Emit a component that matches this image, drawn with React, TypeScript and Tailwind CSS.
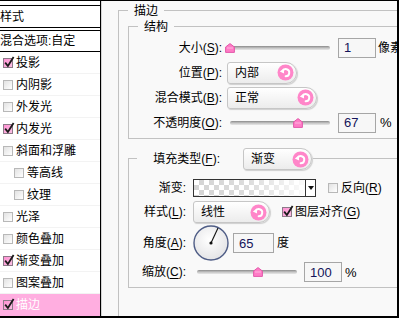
import React from 'react';

const Check = ({ checked }: { checked?: boolean }) =>
  checked ? (
    <span className="relative block w-[10px] h-[10px] border border-[#8c7a88] bg-gradient-to-br from-[#ff8fd2] to-[#f9c0e4] shrink-0">
      <svg className="absolute left-[0px] top-[-3px]" width="11" height="12" viewBox="0 0 11 12">
        <path d="M1.2 6.6 L3.9 10 L9.6 1" stroke="#1a1a1a" strokeWidth="1.8" fill="none" />
      </svg>
    </span>
  ) : (
    <span className="block w-[10px] h-[10px] border border-[#b8b8b8] bg-gradient-to-br from-[#e2e2e2] to-white shrink-0" />
  );

const PinkIcon = () => (
  <svg width="17" height="17" viewBox="0 0 17 17" className="shrink-0">
    <circle cx="8.5" cy="8.5" r="8" fill="#ff86c9" />
    <path d="M5.4 7.2 A3.6 3.6 0 1 1 8.6 12.3" stroke="#fff" strokeWidth="1.9" fill="none" strokeLinecap="round" />
    <path d="M2.8 7.4 L6.9 4.4 L7.1 9.4 Z" fill="#fff" />
  </svg>
);

const Dropdown = ({ w, text }: { w: string; text: string }) => (
  <div
    className={`${w} h-[22px] shrink-0 flex items-center border border-[#c6c6c6] rounded-l-[3px] rounded-r-[11px] bg-gradient-to-b from-white to-[#ececec] shadow-[1px_1px_1px_#cfcfcf] pl-[7px] pr-[2px]`}
  >
    <span className="whitespace-nowrap">{text}</span>
    <span className="ml-auto flex">
      <PinkIcon />
    </span>
  </div>
);

const Slider = ({ w, pos }: { w: string; pos: number }) => (
  <div className={`relative ${w} h-[10px] shrink-0 flex items-center`}>
    <div className="w-full h-[4px] rounded-full bg-gradient-to-b from-[#8a8a8a] via-[#c4c4c4] to-[#e8e8e8]" />
    <svg className="absolute top-[0px]" style={{ left: pos - 5 }} width="10" height="10" viewBox="0 0 10 10">
      <path d="M5 0.6 L9.4 4 L9.4 9.4 L0.6 9.4 L0.6 4 Z" fill="#ff7cc6" stroke="#e25aab" strokeWidth="1" />
      <path d="M2 5 L8 5" stroke="#ffb6e0" strokeWidth="1" />
    </svg>
  </div>
);

const NumInput = ({ w, v }: { w: string; v: string }) => (
  <div
    className={`${w} h-[20px] shrink-0 border border-[#a6a6a6] bg-[#f7f7f7] flex items-center pl-[5px] text-[#14145a] text-[13px]`}
  >
    {v}
  </div>
);

const Dial = () => (
  <svg width="36" height="36" viewBox="0 0 36 36" className="shrink-0">
    <defs>
      <radialGradient id="dg" cx="45%" cy="40%" r="60%">
        <stop offset="0%" stopColor="#ffffff" />
        <stop offset="100%" stopColor="#e4e4e6" />
      </radialGradient>
    </defs>
    <circle cx="18" cy="18" r="17" fill="url(#dg)" stroke="#4f5d86" strokeWidth="1.4" />
    <line x1="18" y1="18" x2="25" y2="3" stroke="#111" strokeWidth="1.1" />
    <circle cx="18" cy="18" r="1.6" fill="#111" />
  </svg>
);

const rows = [
  { t: '投影', c: true },
  { t: '内阴影' },
  { t: '外发光' },
  { t: '内发光', c: true },
  { t: '斜面和浮雕' },
  { t: '等高线', indent: true },
  { t: '纹理', indent: true },
  { t: '光泽' },
  { t: '颜色叠加' },
  { t: '渐变叠加', c: true },
  { t: '图案叠加' },
  { t: '描边', c: true, active: true },
];

export default function App() {
  return (
    <div className="w-[399px] h-[318px] overflow-hidden flex border-t border-r-2 border-b-2 border-black bg-[#f9f9f9] text-[12px] leading-none text-black font-['Liberation_Sans','Noto_Sans_CJK_SC',sans-serif]">
      {/* Left panel */}
      <div className="w-[101px] shrink-0 flex flex-col border-r border-black bg-white pt-[4px]">
        <div className="h-[23px] flex items-center border-y border-black whitespace-nowrap">样式</div>
        <div className="h-[2px]" />
        <div className="h-[22px] flex items-center border-y border-black whitespace-nowrap">混合选项:自定</div>
        {rows.map((r) => (
          <div
            key={r.t}
            className={`h-[22px] shrink-0 flex items-center gap-[3px] whitespace-nowrap ${r.indent ? 'pl-[14px]' : 'pl-[3px]'} ${
              r.active ? 'bg-[#ffaee0] text-white' : 'border-b border-[#f3f3f3]'
            }`}
          >
            <Check checked={r.c} />
            <span>{r.t}</span>
          </div>
        ))}
      </div>

      {/* Right panel */}
      <div className="flex-1 flex flex-col border-l border-[#d4d4d4] bg-[#f9f9f9] pt-[9px] pl-[16px]">
        <div className="relative flex-1 border-l border-t border-[#c2c2c2]">
          <span className="absolute top-[-9px] left-[9px] px-[6px] bg-[#f9f9f9] leading-[18px]">描边</span>

          {/* 结构 */}
          <div className="relative ml-[9px] mt-[15px] border-l border-t border-b border-[#c2c2c2] pt-[8px] pb-[3px]">
            <span className="absolute top-[-9px] left-[9px] px-[6px] bg-[#f9f9f9] leading-[18px]">结构</span>

            <div className="h-[25px] flex items-center whitespace-nowrap">
              <span className="w-[93px] shrink-0 text-right">
                大小(<u className="underline-offset-2">S</u>):
              </span>
              <span className="ml-[6px]">
                <Slider w="w-[102px]" pos={2} />
              </span>
              <span className="ml-[8px]">
                <NumInput w="w-[38px]" v="1" />
              </span>
              <span className="ml-[2px] shrink-0">像素</span>
            </div>

            <div className="h-[25px] flex items-center whitespace-nowrap">
              <span className="w-[93px] shrink-0 text-right">
                位置(<u className="underline-offset-2">P</u>):
              </span>
              <span className="ml-[5px]">
                <Dropdown w="w-[70px]" text="内部" />
              </span>
            </div>

            <div className="h-[25px] flex items-center whitespace-nowrap">
              <span className="w-[93px] shrink-0 text-right">
                混合模式(<u className="underline-offset-2">B</u>):
              </span>
              <span className="ml-[5px]">
                <Dropdown w="w-[90px]" text="正常" />
              </span>
            </div>

            <div className="h-[25px] flex items-center whitespace-nowrap">
              <span className="w-[93px] shrink-0 text-right">
                不透明度(<u className="underline-offset-2">O</u>):
              </span>
              <span className="ml-[8px]">
                <Slider w="w-[100px]" pos={68} />
              </span>
              <span className="ml-[8px]">
                <NumInput w="w-[38px]" v="67" />
              </span>
              <span className="ml-[4px] shrink-0 text-[13px]">%</span>
            </div>
          </div>

          {/* 填充类型 */}
          <div className="relative ml-[9px] mt-[19px] border-l border-t border-b border-[#c2c2c2] pt-[18px] pb-[4px]">
            <div className="absolute top-[-11px] left-[8px] h-[22px] flex items-center bg-[#f9f9f9] pr-[1px] whitespace-nowrap">
              <span className="w-[83px] text-right">
                填充类型(<u className="underline-offset-2">F</u>):
              </span>
              <span className="ml-[23px]">
                <Dropdown w="w-[69px]" text="渐变" />
              </span>
            </div>

            <div className="h-[22px] flex items-center whitespace-nowrap">
              <span className="w-[57px] shrink-0 text-right">渐变:</span>
              <div className="ml-[7px] flex h-[18px] shrink-0 border border-[#333]">
                <div className="relative w-[111px] h-full bg-[repeating-conic-gradient(#d4d4d4_0%_25%,#ffffff_0%_50%)] bg-[length:10px_10px]">
                  <div className="absolute inset-0 bg-gradient-to-r from-white/0 via-white/20 to-white/90" />
                </div>
                <div className="w-[10px] border-l border-[#333] bg-white flex items-center justify-center">
                  <svg width="6" height="4" viewBox="0 0 6 4">
                    <path d="M0 0 L6 0 L3 4 Z" fill="#111" />
                  </svg>
                </div>
              </div>
              <span className="ml-[12px]">
                <Check />
              </span>
              <span className="ml-[3px]">
                反向(<u className="underline-offset-2">R</u>)
              </span>
            </div>

            <div className="h-[26px] flex items-center whitespace-nowrap">
              <span className="w-[57px] shrink-0 text-right">
                样式(<u className="underline-offset-2">L</u>):
              </span>
              <span className="ml-[7px]">
                <Dropdown w="w-[77px]" text="线性" />
              </span>
              <span className="ml-[12px]">
                <Check checked />
              </span>
              <span className="ml-[3px]">
                图层对齐(<u className="underline-offset-2">G</u>)
              </span>
            </div>

            <div className="h-[36px] flex items-center whitespace-nowrap">
              <span className="w-[57px] shrink-0 text-right">
                角度(<u className="underline-offset-2">A</u>):
              </span>
              <span className="ml-[7px] flex">
                <Dial />
              </span>
              <span className="ml-[4px]">
                <NumInput w="w-[41px]" v="65" />
              </span>
              <span className="ml-[3px]">度</span>
            </div>

            <div className="h-[22px] flex items-center whitespace-nowrap">
              <span className="w-[57px] shrink-0 text-right">
                缩放(<u className="underline-offset-2">C</u>):
              </span>
              <span className="ml-[11px]">
                <Slider w="w-[100px]" pos={61} />
              </span>
              <span className="ml-[7px]">
                <NumInput w="w-[38px]" v="100" />
              </span>
              <span className="ml-[3px] text-[13px]">%</span>
            </div>
          </div>
        </div>
      </div>
    </div>
  );
}
